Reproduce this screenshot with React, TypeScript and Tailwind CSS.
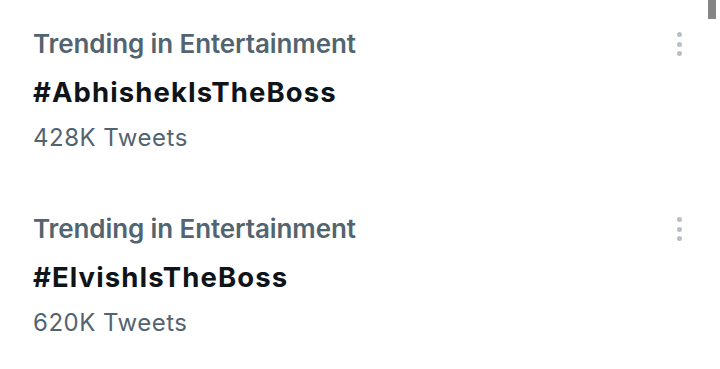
import React from "react";

function Dots() {
  return (
    <div className="flex flex-col items-center gap-[4.5px] mt-[32px]">
      <span className="block w-[5px] h-[5px] rounded-full bg-[#b9bfc5]" />
      <span className="block w-[5px] h-[5px] rounded-full bg-[#b9bfc5]" />
      <span className="block w-[5px] h-[5px] rounded-full bg-[#b9bfc5]" />
    </div>
  );
}

function Trend({ tag, count }: { tag: string; count: string }) {
  return (
    <div className="flex justify-between pl-[33px] pr-[38px] h-[185px]">
      <div className="flex flex-col pt-[20px]">
        <div className="text-[26px] leading-[48px] font-semibold text-[#536471] tracking-[-0.1px]">
          Trending in Entertainment
        </div>
        <div className="text-[27.5px] leading-[48px] font-bold text-[#0f1419] tracking-[1.1px]">{tag}</div>
        <div className="text-[24px] leading-[44px] text-[#536471] tracking-[0.5px]">{count}</div>
      </div>
      <Dots />
    </div>
  );
}

export default function App() {
  return (
    <div
      className="relative w-[720px] h-[369px] bg-white overflow-hidden"
      style={{ fontFamily: "Inter, 'Noto Sans', sans-serif" }}
    >
      <Trend tag="#AbhishekIsTheBoss" count="428K Tweets" />
      <Trend tag="#ElvishIsTheBoss" count="620K Tweets" />
      <div className="absolute right-[4px] top-0 w-[8px] h-[19px] bg-[#858585]" />
    </div>
  );
}
